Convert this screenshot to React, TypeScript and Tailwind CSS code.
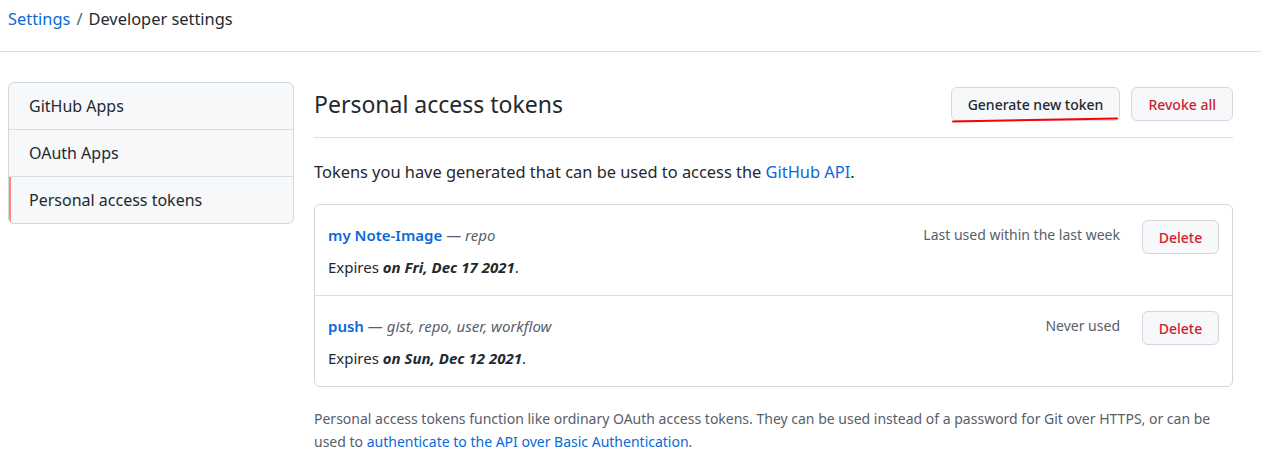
import React from "react";

const tokens = [
  {
    name: "my Note-Image",
    scopes: "repo",
    expires: "on Fri, Dec 17 2021",
    used: "Last used within the last week",
  },
  {
    name: "push",
    scopes: "gist, repo, user, workflow",
    expires: "on Sun, Dec 12 2021",
    used: "Never used",
  },
];

const SideItem = ({ label, active }: { label: string; active?: boolean }) => (
  <div
    className={
      "relative flex items-center px-[20px] text-[16px] text-[#24292f] " +
      (active ? "h-[46px]" : "h-[47px] border-b border-[#d8dee4]")
    }
  >
    {active ? (
      <span className="absolute left-0 top-0 bottom-0 w-[2px] bg-[#fd8c73]" />
    ) : null}
    {label}
  </div>
);

const App = () => {
  return (
    <div
      className="w-[1261px] h-[459px] bg-white text-[#24292f] overflow-hidden"
      style={{ fontFamily: '"Noto Sans", "Liberation Sans", sans-serif' }}
    >
      <div className="h-[52px] border-b border-[#d8dee4] px-2 pt-[7px] text-[16.4px] leading-[24px]">
        <a className="text-[#0969da]">Settings</a>
        <span className="text-[#57606a] mx-[6px]">/</span>
        <span>Developer settings</span>
      </div>

      <div className="flex pt-[30px] pl-2 pr-[28px]">
        <div className="w-[286px] shrink-0">
          <div className="border border-[#d0d7de] rounded-[6px] bg-[#f6f8fa] overflow-hidden">
            <SideItem label="GitHub Apps" />
            <SideItem label="OAuth Apps" />
            <SideItem label="Personal access tokens" active />
          </div>
        </div>

        <div className="flex-1 ml-5">
          <div className="flex items-center justify-between pt-[5px] pb-[16px] border-b border-[#d8dee4]">
            <h2 className="text-[23px] leading-[34px] font-normal">Personal access tokens</h2>
            <div className="flex gap-[11px]">
              <div className="relative">
                <button className="h-[34px] px-[16px] rounded-[6px] border border-[#d0d7de] bg-[#f6f8fa] text-[14px] font-medium text-[#24292f]">
                  Generate new token
                </button>
                <svg
                  className="absolute left-[1px] bottom-[-2px] pointer-events-none"
                  width="166"
                  height="6"
                  viewBox="0 0 166 6"
                >
                  <path d="M1 4.5 L165 1.5" stroke="#ff0000" strokeWidth="2" fill="none" strokeLinecap="round" />
                </svg>
              </div>
              <button className="h-[34px] px-[16px] rounded-[6px] border border-[#d0d7de] bg-[#f6f8fa] text-[14px] font-medium text-[#cf222e]">
                Revoke all
              </button>
            </div>
          </div>

          <p className="mt-[22px] text-[16.4px] leading-[24px]">
            Tokens you have generated that can be used to access the{" "}
            <a className="text-[#0969da]">GitHub API</a>.
          </p>

          <div className="mt-[20px] border border-[#d0d7de] rounded-[6px]">
            {tokens.map((t, i) => (
              <div
                key={t.name}
                className={
                  "flex justify-between px-[13px] py-[15px]" +
                  (i > 0 ? " border-t border-[#d8dee4]" : "")
                }
              >
                <div className="pt-[3px] pb-[1px] text-[15px] leading-[24px]">
                  <div className="h-[24px]">
                    <a className="font-semibold text-[#0969da]">{t.name}</a>
                    <span className="text-[#57606a]">
                      {" "}
                      — <em>{t.scopes}</em>
                    </span>
                  </div>
                  <div className="mt-2 h-[24px]">
                    Expires <em className="font-bold">{t.expires}</em>.
                  </div>
                </div>
                <div className="flex items-start gap-[22px]">
                  <span className="pt-[3px] text-[14px] leading-[24px] text-[#57606a]">{t.used}</span>
                  <button className="h-[34px] w-[77px] rounded-[6px] border border-[#d0d7de] bg-[#f6f8fa] text-[14px] font-medium text-[#cf222e]">
                    Delete
                  </button>
                </div>
              </div>
            ))}
          </div>

          <p className="mt-[20px] text-[14px] leading-[23px] text-[#57606a]">
            Personal access tokens function like ordinary OAuth access tokens. They can be used instead of a
            password for Git over HTTPS, or can be used to{" "}
            <a className="text-[#0969da]">authenticate to the API over Basic Authentication</a>.
          </p>
        </div>
      </div>
    </div>
  );
};

export default App;
